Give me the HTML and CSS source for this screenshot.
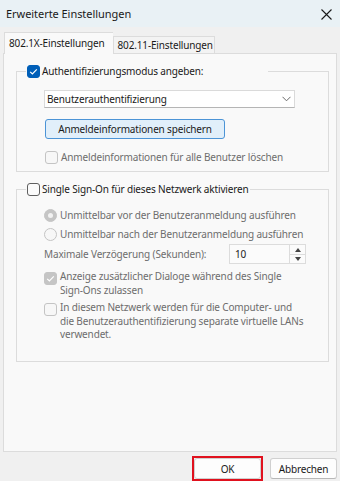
FILE: index.html
```html
<!DOCTYPE html>
<html lang="de">
<head>
    <meta charset="UTF-8">
    <title>Erweiterte Einstellungen</title>
    <link rel="stylesheet" href="styles.css">
</head>
<body>
    <div class="dialog">
        <div class="titlebar">
            <span class="title">Erweiterte Einstellungen</span>
            <svg class="close" width="11" height="11" viewBox="0 0 11 11">
                <path d="M0.5 0.5L10.5 10.5M10.5 0.5L0.5 10.5" stroke="#1a1a1a" stroke-width="1.1" fill="none"/>
            </svg>
        </div>

        <div class="tabs">
            <div class="tab active">802.1X-Einstellungen</div>
            <div class="tab">802.11-Einstellungen</div>
        </div>

        <div class="panel">
            <fieldset class="group group-auth">
                <legend class="legend">
                    <span class="check checked">
                        <svg width="13" height="13" viewBox="0 0 13 13"><path d="M3.2 6.8L5.4 9L9.8 4.4" stroke="#fff" stroke-width="1.2" fill="none"/></svg>
                    </span>
                    <span>Authentifizierungsmodus angeben:</span>
                </legend>

                <div class="select">
                    <span>Benutzerauthentifizierung</span>
                    <svg width="9" height="6" viewBox="0 0 9 6"><path d="M0.5 0.8L4.5 4.8L8.5 0.8" stroke="#6a6a6a" stroke-width="1" fill="none"/></svg>
                </div>

                <div class="btn-save">Anmeldeinformationen speichern</div>

                <div class="row disabled row-delete">
                    <span class="check"></span>
                    <span>Anmeldeinformationen für alle Benutzer löschen</span>
                </div>
            </fieldset>

            <fieldset class="group group-sso">
                <legend class="legend">
                    <span class="check dark"></span>
                    <span>Single Sign-On für dieses Netzwerk aktivieren</span>
                </legend>

                <div class="row disabled radio-first">
                    <span class="radio on"></span>
                    <span>Unmittelbar vor der Benutzeranmeldung ausführen</span>
                </div>
                <div class="row disabled radio-second">
                    <span class="radio"></span>
                    <span>Unmittelbar nach der Benutzeranmeldung ausführen</span>
                </div>

                <div class="delay disabled">
                    <span>Maximale Verzögerung (Sekunden):</span>
                    <div class="spin">
                        <span class="spin-value">10</span>
                        <div class="spin-btns">
                            <span class="arrow up"></span>
                            <span class="arrow down"></span>
                        </div>
                    </div>
                </div>

                <div class="row multi disabled row-dialogs">
                    <span class="check gray">
                        <svg width="13" height="13" viewBox="0 0 13 13"><path d="M3.2 6.8L5.4 9L9.8 4.4" stroke="#fff" stroke-width="1.2" fill="none"/></svg>
                    </span>
                    <span>Anzeige zusätzlicher Dialoge während des Single<br>Sign-Ons zulassen</span>
                </div>

                <div class="row multi disabled row-vlan">
                    <span class="check"></span>
                    <span>In diesem Netzwerk werden für die Computer- und<br>die Benutzerauthentifizierung separate virtuelle LANs<br>verwendet.</span>
                </div>
            </fieldset>
        </div>

        <div class="footer">
            <div class="ok-frame">
                <div class="btn">OK</div>
            </div>
            <div class="btn cancel">Abbrechen</div>
        </div>
    </div>
</body>
</html>
```

FILE: styles.css
```css
body {
    margin: 0;
    font-family: 'Noto Sans', 'Open Sans', sans-serif;
    font-size: 10px;
    letter-spacing: -0.15px;
    color: #1a1a1a;
    background-color: #f0f0f0;
}

.dialog {
    width: 340px;
    height: 481px;
    display: flex;
    flex-direction: column;
}

.titlebar {
    height: 28px;
    background-color: #e9f1f5;
    display: flex;
    align-items: center;
    justify-content: space-between;
    padding: 0 8px 0 6px;
}

.title {
    font-size: 11px;
    letter-spacing: -0.05px;
}

.close {
    margin-top: 1px;
}

/* tabs */

.tabs {
    display: flex;
    align-items: flex-end;
    margin-top: 5px;
    padding-left: 4px;
    height: 21px;
}

.tab {
    height: 16px;
    line-height: 16px;
    padding: 0 1px 0 4px;
    border: 1px solid #dcdcdc;
    border-bottom: none;
    background-color: #f3f3f3;
    white-space: nowrap;
}

.tab.active {
    height: 21px;
    line-height: 21px;
    padding: 0 8px 0 4px;
    background-color: #f9f9f9;
    border-right: none;
    margin-bottom: -1px;
    position: relative;
    z-index: 1;
}

.panel {
    margin: 0 3px;
    height: 395px;
    border: 1px solid #dcdcdc;
    background-color: #f9f9f9;
    padding: 10px 7px 0 12px;
}

/* group boxes */

.group {
    margin: 0;
    padding: 0 0 0 27px;
    border: 1px solid #dcdcdc;
    min-width: 0;
}

.legend {
    display: flex;
    align-items: center;
    height: 14px;
    padding: 0 1px;
    margin-left: -18px;
    white-space: nowrap;
}

.group-auth .legend {
    width: 240px;
}

.group-auth {
    padding-bottom: 7px;
}

.group-sso {
    margin-top: 10px;
    padding-bottom: 19px;
}

.legend span:last-child {
    margin-left: 2px;
}

.check {
    width: 11px;
    height: 11px;
    border: 1px solid #c4c4c4;
    border-radius: 3px;
    background-color: #f7f7f7;
    flex: none;
    display: flex;
    align-items: center;
    justify-content: center;
    box-sizing: content-box;
}

.check svg {
    flex: none;
}

.check.checked {
    background-color: #005fb8;
    border-color: #005fb8;
}

.check.dark {
    border-color: #5f5f5f;
    background-color: #fbfbfb;
}

.check.gray {
    background-color: #c5c5c5;
    border-color: #c5c5c5;
}

.radio {
    width: 11px;
    height: 11px;
    border: 1px solid #c4c4c4;
    border-radius: 50%;
    background-color: #f7f7f7;
    flex: none;
    box-sizing: content-box;
    display: flex;
    align-items: center;
    justify-content: center;
}

.radio.on {
    background-color: #c5c5c5;
    border-color: #c5c5c5;
}

.radio.on::after {
    content: "";
    width: 5px;
    height: 5px;
    border-radius: 50%;
    background-color: #f2f2f2;
}

.row {
    display: flex;
    align-items: center;
    height: 14px;
}

.row > span:last-child {
    margin-left: 3px;
    white-space: nowrap;
}

.row.multi {
    align-items: flex-start;
    height: auto;
    line-height: 13.5px;
}

.row.multi .check {
    margin-top: 2px;
}

.disabled {
    color: #6d6d6d;
}

.select {
    margin-top: 12px;
    width: 244px;
    height: 16px;
    border: 1px solid #dadada;
    border-bottom-color: #b5b5b5;
    background-color: #fff;
    display: flex;
    align-items: center;
    justify-content: space-between;
    padding: 0 3px 0 2px;
    box-sizing: content-box;
    color: #1a1a1a;
}

.btn-save {
    margin-top: 11px;
    margin-left: 1px;
    width: 178px;
    height: 18px;
    border: 1px solid #4c94d6;
    border-radius: 3px;
    background-color: #e1effa;
    display: flex;
    align-items: center;
    justify-content: center;
    white-space: nowrap;
}

.row-delete {
    margin-top: 11px;
    margin-left: 1px;
}

.radio-first {
    margin-top: 12px;
}

.radio-second {
    margin-top: 5px;
}

.delay {
    margin-top: 3px;
    display: flex;
    align-items: center;
    justify-content: space-between;
    width: 262px;
    white-space: nowrap;
}

.spin {
    width: 75px;
    height: 18px;
    border: 1px solid #dcdcdc;
    background-color: #fbfbfb;
    display: flex;
    align-items: center;
    justify-content: space-between;
    color: #1a1a1a;
}

.spin-value {
    margin-left: 5px;
}

.spin-btns {
    width: 15px;
    height: 18px;
    border-left: 1px solid #dcdcdc;
    display: flex;
    flex-direction: column;
}

.arrow {
    flex: 1;
    display: flex;
    align-items: center;
    justify-content: center;
}

.arrow.up {
    border-bottom: 1px solid #dcdcdc;
}

.arrow::after {
    content: "";
    border-left: 3px solid transparent;
    border-right: 3px solid transparent;
}

.arrow.up::after {
    border-bottom: 4px solid #444;
}

.arrow.down::after {
    border-top: 4px solid #444;
}

.row-dialogs {
    margin-top: 6px;
}

.row-vlan {
    margin-top: 4px;
}

/* footer buttons */

.footer {
    display: flex;
    justify-content: flex-end;
    align-items: center;
    gap: 7px;
    padding: 4px 3px 0 0;
}

.ok-frame {
    width: 67px;
    height: 21px;
    border: 2px solid #e0111e;
}

.btn {
    height: 19px;
    border: 1px solid #d0d0d0;
    border-radius: 3px;
    background-color: #fdfdfd;
    display: flex;
    align-items: center;
    justify-content: center;
}

.cancel {
    width: 65px;
    border-bottom-color: #b8b8b8;
}
```
